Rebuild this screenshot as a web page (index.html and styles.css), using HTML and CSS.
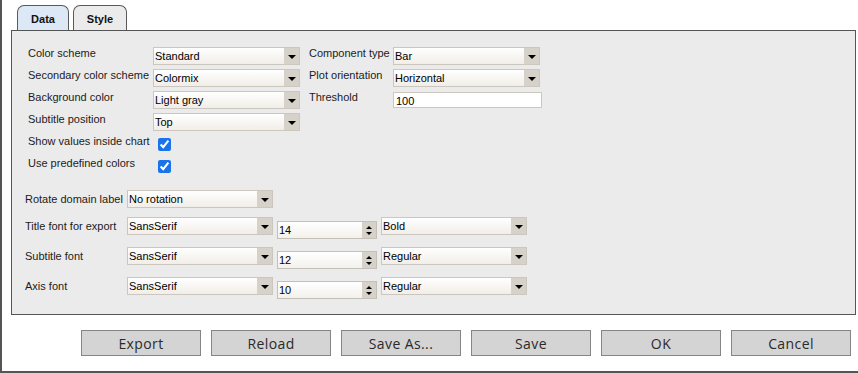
FILE: index.html
```html
<!DOCTYPE html>
<html>
<head>
<meta charset="utf-8">
<link rel="stylesheet" href="styles.css">
</head>
<body>
<div class="frame">
  <div class="tabs">
    <div class="tab tab-active">Data</div>
    <div class="tab tab-style">Style</div>
  </div>
  <div class="panel">
    <div class="top">
      <div class="lbl">Color scheme</div>
      <div class="combo w147"><span class="val">Standard</span><span class="arrow"></span></div>
      <div class="lbl">Component type</div>
      <div class="combo w147"><span class="val">Bar</span><span class="arrow"></span></div>

      <div class="lbl">Secondary color scheme</div>
      <div class="combo w147"><span class="val">Colormix</span><span class="arrow"></span></div>
      <div class="lbl">Plot orientation</div>
      <div class="combo w147"><span class="val">Horizontal</span><span class="arrow"></span></div>

      <div class="lbl">Background color</div>
      <div class="combo w147"><span class="val">Light gray</span><span class="arrow"></span></div>
      <div class="lbl">Threshold</div>
      <div class="field">100</div>

      <div class="lbl">Subtitle position</div>
      <div class="combo w147"><span class="val">Top</span><span class="arrow"></span></div>
      <div></div><div></div>

      <div class="lbl">Show values inside chart</div>
      <div><input class="chk" type="checkbox" checked></div>
      <div></div><div></div>

      <div class="lbl">Use predefined colors</div>
      <div><input class="chk" type="checkbox" checked></div>
      <div></div><div></div>
    </div>

    <div class="bottom">
      <div class="brow">
        <div class="blbl">Rotate domain label</div>
        <div class="combo w146"><span class="val">No rotation</span><span class="arrow"></span></div>
      </div>
      <div class="brow r-title">
        <div class="blbl">Title font for export</div>
        <div class="combo w146"><span class="val">SansSerif</span><span class="arrow"></span></div>
        <div class="spin"><span class="sval">14</span><span class="sbtn"><i class="up"></i><i class="down"></i></span></div>
        <div class="combo w146"><span class="val">Bold</span><span class="arrow"></span></div>
      </div>
      <div class="brow r-next">
        <div class="blbl">Subtitle font</div>
        <div class="combo w146"><span class="val">SansSerif</span><span class="arrow"></span></div>
        <div class="spin"><span class="sval">12</span><span class="sbtn"><i class="up"></i><i class="down"></i></span></div>
        <div class="combo w146"><span class="val">Regular</span><span class="arrow"></span></div>
      </div>
      <div class="brow r-next">
        <div class="blbl">Axis font</div>
        <div class="combo w146"><span class="val">SansSerif</span><span class="arrow"></span></div>
        <div class="spin"><span class="sval">10</span><span class="sbtn"><i class="up"></i><i class="down"></i></span></div>
        <div class="combo w146"><span class="val">Regular</span><span class="arrow"></span></div>
      </div>
    </div>
  </div>
  <div class="buttons">
    <button class="btn">Export</button>
    <button class="btn">Reload</button>
    <button class="btn">Save As...</button>
    <button class="btn">Save</button>
    <button class="btn">OK</button>
    <button class="btn">Cancel</button>
  </div>
</div>
</body>
</html>
```
FILE: styles.css
```css
html, body {
  margin: 0;
  padding: 0;
  background: #ffffff;
}
.frame {
  width: 858px;
  height: 373px;
  box-sizing: border-box;
  border-left: 2px solid #555555;
  border-bottom: 2px solid #555555;
  font-family: "Liberation Sans", Arial, sans-serif;
  font-size: 11px;
  color: #1b1b1b;
}
.tabs {
  display: flex;
  gap: 4px;
  padding: 5px 0 0 15px;
  height: 25px;
}
.tab {
  box-sizing: border-box;
  height: 25px;
  border: 1px solid #5a5a5a;
  border-bottom: none;
  border-radius: 7px 7px 0 0;
  font-weight: bold;
  font-size: 11px;
  display: flex;
  align-items: center;
  justify-content: center;
  padding-top: 2px;
  color: #111;
}
.tab-active {
  width: 52px;
  background: #dce8f6;
}
.tab-style {
  width: 54px;
  background: #ebebeb;
}
.panel {
  margin-left: 9px;
  width: 845px;
  height: 285px;
  box-sizing: border-box;
  border: 1px solid #555555;
  background: #ebebeb;
}
.top {
  display: grid;
  grid-template-columns: 125px 156px 84px 149px;
  grid-auto-rows: 18px;
  row-gap: 4px;
  padding: 16px 0 0 16px;
}
.lbl {
  line-height: 13px;
  white-space: nowrap;
}
.combo {
  display: flex;
  height: 18px;
  box-sizing: border-box;
  border: 1px solid #cbc7bf;
  background: linear-gradient(#ffffff, #f1eee8);
}
.w147 { width: 147px; }
.w146 { width: 146px; }
.val {
  flex: 1;
  padding: 2px 0 0 1px;
  line-height: 13px;
  color: #000;
  white-space: nowrap;
}
.arrow {
  width: 15px;
  background: #d6d2ca;
  display: flex;
  align-items: center;
  justify-content: center;
}
.arrow::after {
  content: "";
  border-top: 4px solid #000;
  border-left: 4px solid transparent;
  border-right: 4px solid transparent;
  margin-top: 1px;
}
.field {
  width: 149px;
  height: 16px;
  margin-top: 1px;
  box-sizing: border-box;
  border: 1px solid #cbc7bf;
  background: #ffffff;
  padding: 2px 0 0 2px;
  line-height: 12px;
  color: #000;
}
.chk {
  margin: 3px 0 0 5px;
  width: 13px;
  height: 13px;
  accent-color: #1a73e8;
  display: block;
}
.bottom {
  margin-top: 15px;
  padding-left: 13px;
  display: flex;
  flex-direction: column;
}
.brow {
  display: flex;
  align-items: flex-start;
}
.r-title { margin-top: 9px; }
.r-next { margin-top: 8px; }
.blbl {
  width: 102px;
  padding-top: 3px;
  line-height: 13px;
  white-space: nowrap;
}
.spin {
  display: flex;
  width: 100px;
  height: 18px;
  margin: 4px 4px 0 4px;
  box-sizing: border-box;
  border: 1px solid #c4c0b8;
  background: linear-gradient(#ffffff, #f3f1ec);
}
.sval {
  flex: 1;
  padding: 2px 0 0 1px;
  line-height: 13px;
  color: #000;
}
.sbtn {
  width: 14px;
  background: #d6d2ca;
  display: flex;
  flex-direction: column;
  align-items: center;
  justify-content: center;
  gap: 3px;
}
.sbtn .up {
  display: block;
  border-bottom: 3px solid #000;
  border-left: 3px solid transparent;
  border-right: 3px solid transparent;
}
.sbtn .down {
  display: block;
  border-top: 3px solid #000;
  border-left: 3px solid transparent;
  border-right: 3px solid transparent;
}
.buttons {
  display: flex;
  gap: 10px;
  margin: 15px 0 0 79px;
}
.btn {
  width: 120px;
  height: 26px;
  box-sizing: border-box;
  border: 1px solid #858585;
  background: #d4d4d4;
  font-family: "Open Sans", sans-serif;
  font-size: 14px;
  letter-spacing: 0.4px;
  color: #2a2a2a;
  padding: 0;
  border-radius: 0;
}
```
